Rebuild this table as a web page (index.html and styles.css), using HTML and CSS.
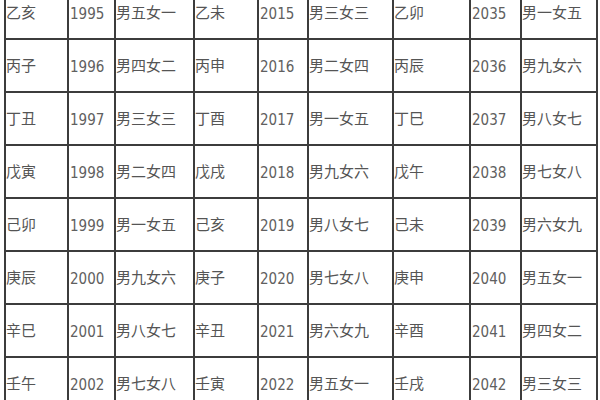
FILE: index.html
```html
<!DOCTYPE html>
<html lang="zh">
<head>
<meta charset="utf-8">
<link rel="stylesheet" href="styles.css">
</head>
<body>
<div class="frame">
<table class="grid">
<colgroup>
<col class="c1"><col class="c2"><col class="c3">
<col class="c4"><col class="c5"><col class="c6">
<col class="c7"><col class="c8"><col class="c9">
</colgroup>
<tbody>
<tr><td>乙亥</td><td class="n">1995</td><td>男五女一</td><td>乙未</td><td class="n">2015</td><td>男三女三</td><td>乙卯</td><td class="n">2035</td><td>男一女五</td></tr>
<tr><td>丙子</td><td class="n">1996</td><td>男四女二</td><td>丙申</td><td class="n">2016</td><td>男二女四</td><td>丙辰</td><td class="n">2036</td><td>男九女六</td></tr>
<tr><td>丁丑</td><td class="n">1997</td><td>男三女三</td><td>丁酉</td><td class="n">2017</td><td>男一女五</td><td>丁巳</td><td class="n">2037</td><td>男八女七</td></tr>
<tr><td>戊寅</td><td class="n">1998</td><td>男二女四</td><td>戊戌</td><td class="n">2018</td><td>男九女六</td><td>戊午</td><td class="n">2038</td><td>男七女八</td></tr>
<tr><td>己卯</td><td class="n">1999</td><td>男一女五</td><td>己亥</td><td class="n">2019</td><td>男八女七</td><td>己未</td><td class="n">2039</td><td>男六女九</td></tr>
<tr><td>庚辰</td><td class="n">2000</td><td>男九女六</td><td>庚子</td><td class="n">2020</td><td>男七女八</td><td>庚申</td><td class="n">2040</td><td>男五女一</td></tr>
<tr><td>辛巳</td><td class="n">2001</td><td>男八女七</td><td>辛丑</td><td class="n">2021</td><td>男六女九</td><td>辛酉</td><td class="n">2041</td><td>男四女二</td></tr>
<tr><td>壬午</td><td class="n">2002</td><td>男七女八</td><td>壬寅</td><td class="n">2022</td><td>男五女一</td><td>壬戌</td><td class="n">2042</td><td>男三女三</td></tr>
</tbody>
</table>
</div>
</body>
</html>
```
FILE: styles.css
```css
html, body {
  margin: 0;
  padding: 0;
  background: #ffffff;
}
.frame {
  width: 600px;
  height: 400px;
  overflow: hidden;
}
.grid {
  border-collapse: collapse;
  table-layout: fixed;
  width: 592px;
  margin: -15px 0 0 4px;
  font-family: "Noto Sans CJK SC", "Microsoft YaHei", sans-serif;
  font-size: 15px;
  color: #555555;
}
.c1 { width: 63px; }
.c2 { width: 47px; }
.c3 { width: 79px; }
.c4 { width: 64px; }
.c5 { width: 50px; }
.c6 { width: 85px; }
.c7 { width: 77px; }
.c8 { width: 51px; }
.c9 { width: 76px; }
.grid td {
  border: 2px solid #3c3c3c;
  height: 53px;
  box-sizing: border-box;
  padding: 0 0 2px 0;
  vertical-align: middle;
  white-space: nowrap;
  overflow: hidden;
  line-height: 1;
}
.grid td.n {
  font-family: "DejaVu Sans", sans-serif;
  font-stretch: condensed;
  font-weight: 400;
  font-size: 15px;
  color: #606060;
  padding: 3px 0 0 1px;
}
```
